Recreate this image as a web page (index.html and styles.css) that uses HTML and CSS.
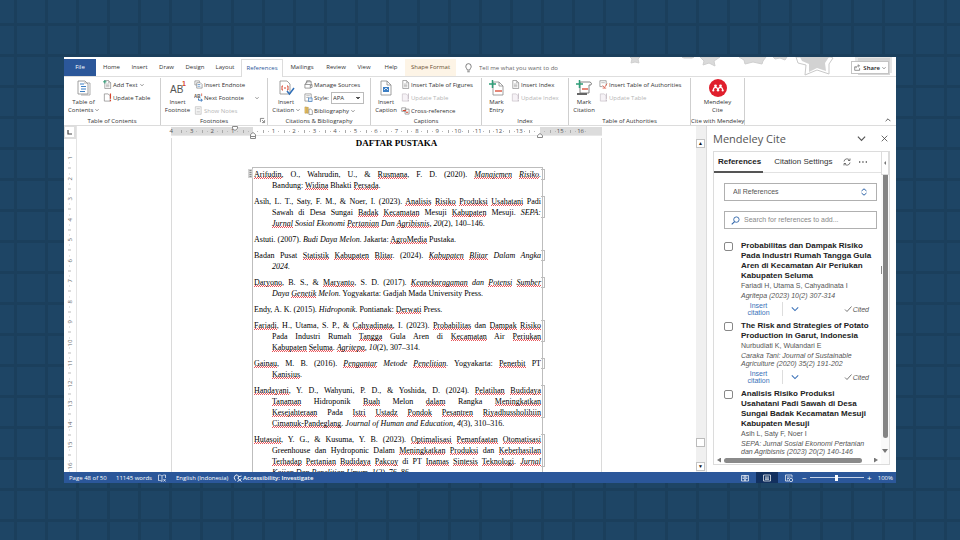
FILE: index.html
```html
<!DOCTYPE html>
<html lang="id">
<head>
<meta charset="utf-8">
<title>Daftar Pustaka</title>
<link rel="stylesheet" href="styles.css">
</head>
<body>
<svg class="defs" aria-hidden="true">
  <symbol id="page" viewBox="0 0 10 10"><path d="M2 .5h4L8.500 3v6.500H2z" fill="#fff" stroke="#777" stroke-width=".7"/><path d="M6 .5V3h2.500M3.300 4.500h3.800M3.300 6h3.800M3.300 7.500h3.800" fill="none" stroke="#888" stroke-width=".6"/></symbol>
  <symbol id="addtext" viewBox="0 0 10 10"><use href="#page"/><path d="M0 2h4M2 0v4" stroke="#2f9d78" stroke-width="1"/></symbol>
  <symbol id="update" viewBox="0 0 10 10"><path d="M1.500 1h4L8 3v6H1.500z" fill="#fff" stroke="#777" stroke-width=".7"/><path d="M8.300 .5v6M8.300 7.800v1.500" stroke="#d8452e" stroke-width="1.300"/></symbol>
  <symbol id="updateoff" viewBox="0 0 10 10"><path d="M1.500 1h4L8 3v6H1.500z" fill="#f6f2f6" stroke="#c4bcc4" stroke-width=".7"/><path d="M8.300 .5v6M8.300 7.800v1.500" stroke="#c4bcc4" stroke-width="1"/></symbol>
  <symbol id="endnote" viewBox="0 0 10 10"><path d="M1 1h5v1.500M1 1v4.500h2M3 3h4l2 2v4H3z" fill="#fff" stroke="#777" stroke-width=".7"/><path d="M4 5h3M4 7h3" stroke="#4d86c6" stroke-width=".8"/></symbol>
  <symbol id="nextfoot" viewBox="0 0 10 10"><text x="0" y="6" class="ab">AB</text><path d="M8.500 .5v3" stroke="#d8452e" stroke-width=".8"/><path d="M5 6v2h4M7.500 6.300L9.300 8 7.500 9.700" fill="none" stroke="#2f6fb8" stroke-width="1"/></symbol>
  <symbol id="notes" viewBox="0 0 10 10"><path d="M1.500 .8h6.500v8.400H1.500z" fill="#f4f4f4" stroke="#bbb" stroke-width=".7"/><path d="M3 3h3.500M3 6.500h3.500" stroke="#c5c5c5" stroke-width="1"/></symbol>
  <symbol id="sources" viewBox="0 0 10 10"><path d="M1 5l2-3h5v4M3 4V.8h4L8 2M1 5h6v4H1zM7 6l2-1v3L7 9" fill="#fff" stroke="#666" stroke-width=".7"/></symbol>
  <symbol id="style" viewBox="0 0 10 10"><path d="M1 1h7v8H1z" fill="#fff" stroke="#777" stroke-width=".7"/><path d="M2.500 3h4M2.500 5h3" stroke="#888" stroke-width=".6"/><path d="M5 5.500h4v4H5z" fill="#dfeaf6" stroke="#2f6fb8" stroke-width=".7"/></symbol>
  <symbol id="biblio" viewBox="0 0 10 10"><path d="M1 1h1.800v7H1zM3.300 1.500h1.500v6.500H3.300z" fill="#f2c45a" stroke="#a98a3f" stroke-width=".5"/><path d="M5.500 3.500h2L9.300 5v4.500H5.500z" fill="#fff" stroke="#777" stroke-width=".7"/></symbol>
  <symbol id="cross" viewBox="0 0 10 10"><path d="M.8 2h4.500v4H.8zM4.500 3.500H9V9H4.500z" fill="#fff" stroke="#777" stroke-width=".7"/><path d="M2 5h3.500M5.500 7h2.500" stroke="#d8452e" stroke-width="1.200"/></symbol>
  <symbol id="toa" viewBox="0 0 10 10"><path d="M1 .8h7v5.500M1 .8v6.500h3" fill="none" stroke="#777" stroke-width=".7"/><path d="M2.500 3h4" stroke="#888" stroke-width=".6"/><path d="M4 6l2 2.500L9 4M4 9h4" fill="none" stroke="#d8452e" stroke-width=".8"/></symbol>
  <symbol id="chev" viewBox="0 0 10 10"><path d="M1 3l4 4 4-4" fill="none" stroke="currentColor" stroke-width="1.300"/></symbol>
</svg>

<main class="word">
  <header class="tabs">
    <svg class="stars" viewBox="0 0 270 20" aria-hidden="true">
      <g fill="#dadada" stroke="#cfcfcf" stroke-width="1" stroke-linejoin="round">
        <path d="M4 0l2 2-1 4 4-1 4 1-1-4 2-2z"/><path d="M56 0l2 1h8l2-1z"/>
        <path d="M74 0l4 4-1 4 6-2 6 3-1-5 6-4z"/><path d="M113 0l5 3 1 4 8-2 9 2 1-3 3-4z"/><path d="M147 0l2 2 5-1 5 2 2-3z"/>
      </g>
      <path d="M170 0l2 6 8 2-1 10 12-5 12 4 0-10 4-6-2-1z" fill="#fff" stroke="#c9c9c9"/>
      <path d="M174 0l2 4 7 3v8l8-4 9 3-1-8 4-6z" fill="#d2d2d2"/>
      <path d="M229 0h37v16h-37z" fill="#e6e6e6"/><path d="M232 1h32v17h-32z" fill="#d6d6d6"/>
    </svg>
    <nav class="tablist">
      <a class="file" href="#">File</a>
      <a class="tab t-home" href="#">Home</a>
      <a class="tab t-insert" href="#">Insert</a>
      <a class="tab t-draw" href="#">Draw</a>
      <a class="tab t-design" href="#">Design</a>
      <a class="tab t-layout" href="#">Layout</a>
      <a class="tab active" href="#">References</a>
      <a class="tab t-mail" href="#">Mailings</a>
      <a class="tab t-review" href="#">Review</a>
      <a class="tab t-view" href="#">View</a>
      <a class="tab t-help" href="#">Help</a>
      <a class="tab shape" href="#">Shape Format</a>
    </nav>
    <label class="tell"><svg class="bulb" viewBox="0 0 10 12"><path d="M3.500 8.500C3.500 7 1.800 6.200 1.800 4a3.200 3.200 0 0 1 6.400 0c0 2.200-1.700 3-1.700 4.500zM3.500 10.500h3" fill="none" stroke="#555" stroke-width=".9"/></svg><input type="text" placeholder="Tell me what you want to do"></label>
    <button class="share"><svg class="i7" viewBox="0 0 10 10"><path d="M3 4H1v5h7V6M3 6c0-2.500 1.500-3.500 4-3.500M5.500.8L8 2.500 6 4.500" fill="none" stroke="#555" stroke-width=".9"/></svg><b>Share</b><svg class="i4"><use href="#chev"/></svg></button>
  </header>

  <section class="ribbon">
    <div class="group g-toc">
      <button class="big"><svg viewBox="0 0 16 16"><path d="M2 1h7l3 3v10H2z" fill="#fff" stroke="#888" stroke-width=".8"/><path d="M8 3h6v12H5" fill="none" stroke="#999" stroke-width=".8"/><path d="M4 4h4M5 6.500h5M5 9h5M4 11.500h5" stroke="#3d7fc4" stroke-width="1"/></svg><span>Table of<br>Contents <svg class="i4"><use href="#chev"/></svg></span></button>
      <div class="smalls">
        <button><svg class="i9"><use href="#addtext"/></svg>Add Text <svg class="i4"><use href="#chev"/></svg></button>
        <button><svg class="i9"><use href="#update"/></svg>Update Table</button>
      </div>
      <div class="caption">Table of Contents</div>
    </div>
    <div class="group g-foot">
      <button class="big"><svg viewBox="0 0 16 16"><text x="0" y="13" class="abbig">AB</text><text x="12" y="6" class="one">1</text></svg><span>Insert<br>Footnote</span></button>
      <div class="smalls">
        <button><svg class="i9"><use href="#endnote"/></svg>Insert Endnote</button>
        <button class="wide"><svg class="i9"><use href="#nextfoot"/></svg>Next Footnote <svg class="i4 end"><use href="#chev"/></svg></button>
        <button disabled><svg class="i9"><use href="#notes"/></svg>Show Notes</button>
      </div>
      <div class="caption">Footnotes <svg class="launch" viewBox="0 0 6 6"><path d="M.5 5V.5H5M2.500 2.500L5 5M5.500 2.500v3h-3" fill="none" stroke="#555" stroke-width=".8"/></svg></div>
    </div>
    <div class="group g-cite">
      <button class="big"><svg viewBox="0 0 16 16"><path d="M2 1h7l3 3v10H2z" fill="#fff" stroke="#888" stroke-width=".8"/><path d="M5 6H4v4h1M9 6h1v4H9M6 8h2" fill="none" stroke="#d8452e" stroke-width="1"/><path d="M9 11l2.500 3L16 8" fill="none" stroke="#2f6fb8" stroke-width="1.500"/></svg><span>Insert<br>Citation <svg class="i4"><use href="#chev"/></svg></span></button>
      <div class="smalls">
        <button><svg class="i9"><use href="#sources"/></svg>Manage Sources</button>
        <label class="stylebox"><svg class="i9"><use href="#style"/></svg>Style: <select><option>APA</option></select></label>
        <button><svg class="i9"><use href="#biblio"/></svg>Bibliography <svg class="i4"><use href="#chev"/></svg></button>
      </div>
      <div class="caption">Citations &amp; Bibliography</div>
    </div>
    <div class="group g-cap">
      <button class="big"><svg viewBox="0 0 16 16"><path d="M3 1h6l4 4v10H3z" fill="#fff" stroke="#888" stroke-width=".8"/><path d="M9 1v4h4" fill="none" stroke="#888" stroke-width=".8"/><path d="M5 7h6v5H5z" fill="#3d7fc4"/><path d="M6 10l2-2 2 2" fill="none" stroke="#fff" stroke-width=".8"/></svg><span>Insert<br>Caption</span></button>
      <div class="smalls">
        <button><svg class="i9"><use href="#page"/></svg>Insert Table of Figures</button>
        <button disabled><svg class="i9"><use href="#updateoff"/></svg>Update Table</button>
        <button><svg class="i9"><use href="#cross"/></svg>Cross-reference</button>
      </div>
      <div class="caption">Captions</div>
    </div>
    <div class="group g-index">
      <button class="big"><svg viewBox="0 0 16 16"><path d="M4 2h6l4 4v9H4z" fill="#fff" stroke="#888" stroke-width=".8"/><path d="M10 2v4h4" fill="none" stroke="#888" stroke-width=".8"/><path d="M6 11h7" stroke="#d8452e" stroke-width="1.300"/><path d="M0 4h7M3.500 0v8" stroke="#2f9d78" stroke-width="1.500"/></svg><span>Mark<br>Entry</span></button>
      <div class="smalls">
        <button><svg class="i9"><use href="#page"/></svg>Insert Index</button>
        <button disabled><svg class="i9"><use href="#updateoff"/></svg>Update Index</button>
      </div>
      <div class="caption">Index</div>
    </div>
    <div class="group g-auth">
      <button class="big"><svg viewBox="0 0 16 16"><path d="M4 2h10a2 2 0 0 1 1 3h-2v8H4z" fill="#fff" stroke="#777" stroke-width=".9"/><path d="M1 13h10v2H1z" fill="#666"/><path d="M6 9h6" stroke="#d8452e" stroke-width="1.300"/><path d="M0 4h7M3.500 0v8" stroke="#2f9d78" stroke-width="1.500"/></svg><span>Mark<br>Citation</span></button>
      <div class="smalls">
        <button><svg class="i9"><use href="#toa"/></svg>Insert Table of Authorities</button>
        <button disabled><svg class="i9"><use href="#updateoff"/></svg>Update Table</button>
      </div>
      <div class="caption">Table of Authorities</div>
    </div>
    <div class="group g-mend">
      <button class="big"><svg class="mend" viewBox="0 0 18 18"><circle cx="9" cy="9" r="9" fill="#e01f2d"/><g fill="#fff"><circle cx="6.500" cy="6.800" r="1.400"/><circle cx="11.500" cy="6.800" r="1.400"/><circle cx="4.300" cy="11.500" r="1.100"/><circle cx="13.700" cy="11.500" r="1.100"/><circle cx="9" cy="11.300" r="1.200"/></g><path d="M4.300 11c.3-2 1-2.600 2.200-2.600s2 .8 2.500 2c.5-1.200 1.300-2 2.500-2s1.900.6 2.200 2.600" fill="none" stroke="#fff" stroke-width="1.200"/></svg><span>Mendeley<br>Cite</span></button>
      <div class="caption">Cite with Mendeley</div>
    </div>
    <button class="collapse" aria-label="Collapse the ribbon"><svg class="i6 flip"><use href="#chev"/></svg></button>
  </section>

  <div class="body">
    <div class="vside">
      <div class="corner"><svg class="i5" viewBox="0 0 5 5"><path d="M1 0v4h4" fill="none" stroke="#444" stroke-width="1.200"/></svg></div>
      <div class="vruler"><span>1</span><span>2</span><span>3</span><span>4</span><span>5</span><span>6</span><span>7</span><span>8</span><span>9</span><span>10</span><span>11</span><span>12</span><span>13</span><span>14</span><span>15</span><span>16</span></div>
    </div>
    <div class="canvas">
      <div class="ruler">
        <div class="nums"><span>4</span><span>3</span><span>2</span><span>1</span><span></span><span>1</span><span>2</span><span>3</span><span>4</span><span>5</span><span>6</span><span>7</span><span>8</span><span>9</span><span>10</span><span>11</span><span>12</span><span>13</span><span></span><span>15</span><span>16</span></div>
        <svg class="mark first" viewBox="0 0 6 5"><path d="M.5.5h5v2L3 4.500.5 2.500z"/></svg>
        <svg class="mark hang" viewBox="0 0 6 7"><path d="M3 .5l2.500 2v4h-5v-4zM.5 4.500h5"/></svg>
        <svg class="mark right" viewBox="0 0 6 5"><path d="M3 .5l2.500 2v2h-5v-2z"/></svg>
      </div>
      <article class="sheet">
        <h1>DAFTAR PUSTAKA</h1>
        <div class="bib">
          <svg class="grip" viewBox="0 0 5 9"><path d="M0 0h5v9H0z" fill="#d4d4d4"/><path d="M1.500 1.500h2M1.500 3.500h2M1.500 5.500h2M1.500 7.500h2" stroke="#777" stroke-width=".8"/></svg>
          <p class="multi"><span class="j"><u>Arifudin</u>, O., Wahrudin, U., &amp; <u>Rusmana</u>, F. D. (2020). <i><u>Manajemen</u> <u>Risiko</u>.</i></span><span>Bandung: <u>Widina</u> Bhakti <u>Persada</u>.</span></p>
          <p class="multi"><span class="j">Asih, L. T., Saty, F. M., &amp; Noer, I. (2023). <u>Analisis</u> <u>Risiko</u> <u>Produksi</u> <u>Usahatani</u> Padi</span><span class="j">Sawah di Desa Sungai <u>Badak</u> <u>Kecamatan</u> Mesuji <u>Kabupaten</u> Mesuji. <i>SEPA:</i></span><span><i><u>Jurnal</u> Sosial Ekonomi <u>Pertanian</u> Dan <u>Agribisnis</u>, 20</i>(2), 140–146.</span></p>
          <p><span>Astuti. (2007). <i>Budi Daya Melon.</i> Jakarta: <u>AgroMedia</u> Pustaka.</span></p>
          <p class="multi"><span class="j">Badan Pusat <u>Statistik</u> <u>Kabupaten</u> <u>Blitar</u>. (2024). <i><u>Kabupaten</u> <u>Blitar</u> Dalam Angka</i></span><span><i>2024.</i></span></p>
          <p class="multi"><span class="j"><u>Daryono</u>, B. S., &amp; <u>Maryanto</u>, S. D. (2017). <i><u>Keanekaragaman</u> dan <u>Potensi</u> <u>Sumber</u></i></span><span><i>Daya <u>Genetik</u> Melon.</i> Yogyakarta: Gadjah Mada University Press.</span></p>
          <p><span>Endy, A. K. (2015). <i>Hidroponik.</i> Pontianak: <u>Derwati</u> Press.</span></p>
          <p class="multi"><span class="j"><u>Fariadi</u>, H., Utama, S. P., &amp; <u>Cahyadinata</u>, I. (2023). <u>Probabilitas</u> dan <u>Dampak</u> <u>Risiko</u></span><span class="j">Pada Industri Rumah <u>Tangga</u> Gula Aren di <u>Kecamatan</u> Air <u>Periukan</u></span><span><u>Kabupaten</u> <u>Seluma</u>. <i><u>Agritepa</u>, 10</i>(2), 307–314.</span></p>
          <p class="multi"><span class="j"><u>Gainau</u>, M. B. (2016). <i><u>Pengantar</u> Metode <u>Penelitian</u>.</i> Yogyakarta: <u>Penerbit</u> PT</span><span><u>Kanisius</u>.</span></p>
          <p class="multi"><span class="j"><u>Handayani</u>, Y. D., Wahyuni, P. D., &amp; Yoshida, D. (2024). <u>Pelatihan</u> <u>Budidaya</u></span><span class="j"><u>Tanaman</u> Hidroponik <u>Buah</u> Melon <u>dalam</u> Rangka <u>Meningkatkan</u></span><span class="j"><u>Kesejahteraan</u> Pada <u>Istri</u> <u>Ustadz</u> <u>Pondok</u> <u>Pesantren</u> <u>Riyadhussholihiin</u></span><span><u>Cimanuk-Pandeglang</u>. <i>Journal of Human and Education, 4</i>(3), 310–316.</span></p>
          <p class="multi"><span class="j"><u>Hutasoit</u>, Y. G., &amp; Kusuma, Y. B. (2023). <u>Optimalisasi</u> <u>Pemanfaatan</u> <u>Otomatisasi</u></span><span class="j">Greenhouse dan Hydroponic Dalam <u>Meningkatkan</u> <u>Produksi</u> dan <u>Keberhasilan</u></span><span class="j"><u>Terhadap</u> <u>Pertanian</u> <u>Budidaya</u> <u>Pakcoy</u> di PT <u>Inamas</u> <u>Sintesis</u> <u>Teknologi</u>. <i><u>Jurnal</u></i></span><span><i>Kajian Dan Penelitian Umum, 1</i>(2), 76–86.</span></p>
        </div>
      </article>
    </div>
    <div class="vscroll"><button aria-label="Scroll up">▲</button><span class="thumb"></span><button aria-label="Scroll down">▼</button></div>
    <aside class="pane">
      <div class="panehead"><h2>Mendeley Cite</h2><svg class="i9"><use href="#chev"/></svg><svg class="i7" viewBox="0 0 8 8"><path d="M.8.8l6.400 6.400M7.200.8L.8 7.200" stroke="#444" stroke-width=".9"/></svg></div>
      <div class="frame">
        <div class="content">
          <nav class="ptabs"><a class="on" href="#">References</a><a href="#">Citation Settings</a><svg class="i8" viewBox="0 0 8 8"><path d="M1 3.500A3 3 0 0 1 6.500 2.200M7 .5v2H5M7 4.500A3 3 0 0 1 1.500 5.800M1 7.500v-2h2" fill="none" stroke="#555" stroke-width=".8"/></svg><svg class="i8 dots" viewBox="0 0 8 8"><path d="M0 4h1.300M3.300 4h1.300M6.700 4H8" stroke="#555" stroke-width="1.300"/></svg></nav>
          <div class="fields">
            <label class="combo"><select aria-label="Library"><option>All References</option></select><svg class="i8" viewBox="0 0 8 8"><path d="M1.500 3L4 .8 6.500 3M1.500 5L4 7.200 6.500 5" fill="none" stroke="#2d63a8" stroke-width="1"/></svg></label>
            <label class="search"><svg class="i9" viewBox="0 0 10 10"><circle cx="6" cy="4" r="3" fill="none" stroke="#2d63a8"/><path d="M4 6.200L.8 9.300" stroke="#2d63a8" stroke-width="1.200"/></svg><input type="text" placeholder="Search for references to add..."></label>
          </div>
          <div class="item">
            <input type="checkbox" id="r1">
            <div><label for="r1">Probabilitas dan Dampak Risiko<br>Pada Industri Rumah Tangga Gula<br>Aren di Kecamatan Air Periukan<br>Kabupaten Seluma</label><div class="auth">Fariadi H, Utama S, Cahyadinata I</div><div class="src">Agritepa (2023) 10(2) 307-314</div>
            <div class="acts"><a href="#">Insert<br>citation</a><svg class="i8"><use href="#chev"/></svg><span class="cited"><svg class="i8" viewBox="0 0 8 8"><path d="M1 4.500l2 2 4.500-5" fill="none" stroke="#666" stroke-width=".9"/></svg>Cited</span></div></div>
          </div>
          <div class="item">
            <input type="checkbox" id="r2">
            <div><label for="r2">The Risk and Strategies of Potato<br>Production in Garut, Indonesia</label><div class="auth">Nurbudiati K, Wulandari E</div><div class="src">Caraka Tani: Journal of Sustainable<br>Agriculture (2020) 35(2) 191-202</div>
            <div class="acts"><a href="#">Insert<br>citation</a><svg class="i8"><use href="#chev"/></svg><span class="cited"><svg class="i8" viewBox="0 0 8 8"><path d="M1 4.500l2 2 4.500-5" fill="none" stroke="#666" stroke-width=".9"/></svg>Cited</span></div></div>
          </div>
          <div class="item">
            <input type="checkbox" id="r3">
            <div><label for="r3">Analisis Risiko Produksi<br>Usahatani Padi Sawah di Desa<br>Sungai Badak Kecamatan Mesuji<br>Kabupaten Mesuji</label><div class="auth">Asih L, Saty F, Noer I</div><div class="src">SEPA: Jurnal Sosial Ekonomi Pertanian<br>dan Agribisnis (2023) 20(2) 140-146</div></div>
          </div>
          <div class="hbar"><span class="larr"></span><span class="hthumb"></span><span class="rarr"></span></div>
        </div>
        <div class="rail"><span class="railtop"><span class="larr"></span></span><span class="railthumb"></span><span class="darr"></span></div>
        <span class="inner"></span>
      </div>
    </aside>
  </div>

  <footer class="status">
    <span class="s-page">Page 48 of 50</span><span class="s-words">11145 words</span>
    <svg class="i8" viewBox="0 0 8 8"><path d="M4 2C3 1 2 1 .5 1v5.500C2 6.500 3 6.500 4 7.500M4 2c1-1 2-1 3.500-1v3M4 2v5.500M5.500 5l2 2.500M7.500 5l-2 2.500" fill="none" stroke="#fff" stroke-width=".7"/></svg>
    <span class="s-lang">English (Indonesia)</span>
    <svg class="i8" viewBox="0 0 8 8"><path d="M3 .8A3 3 0 0 0 2 6.500M3.500.8l1 2 3-.8M4.500 2.800L4 5M4 4.500l3.500 3M7.500 4.500l-4 3" fill="none" stroke="#fff" stroke-width=".9"/></svg>
    <b>Accessibility: Investigate</b>
    <span class="views">
      <button aria-label="Read mode"><svg class="i8" viewBox="0 0 8 8"><path d="M4 1.500H.5V7H4zM4 1.500h3.500V7H4zM1.500 3h1.500M1.500 4.500h1.500M5 3h1.500M5 4.500h1.500" fill="none" stroke="#fff" stroke-width=".7"/></svg></button>
      <button class="sel" aria-label="Print layout"><svg class="i8" viewBox="0 0 8 8"><path d="M.5 1h7v6h-7zM2 3h4M2 4.200h4M2 5.400h4" fill="none" stroke="#fff" stroke-width=".7"/></svg></button>
      <button aria-label="Web layout"><svg class="i8" viewBox="0 0 8 8"><path d="M7 3.500V1H.5v6H4M2 3h3.500M2 4.500h2M2 6h1" fill="none" stroke="#fff" stroke-width=".7"/><circle cx="6" cy="6" r="1.700" fill="none" stroke="#fff" stroke-width=".7"/></svg></button>
    </span>
    <span class="zoom"><button>−</button><input type="range" min="0" max="100" value="50" aria-label="Zoom"><button>+</button></span>
    <span class="pct">100%</span>
  </footer>
</main>
</body>
</html>
```
FILE: styles.css
```css
* { box-sizing: border-box; }
body {
  margin: 0;
  height: 100vh;
  padding: 57px 64px;
  display: flex;
  font: 6px/8px "Open Sans", "Noto Sans", sans-serif;
  color: #333;
  background-color: #1e4565;
  background-image:
    linear-gradient(90deg, #1b3f5c 3px, transparent 3px),
    linear-gradient(#1b3f5c 3px, transparent 3px);
  background-size: 31px 31px;
  background-position: 14px 23px;
}
button, input, select { font: inherit; color: inherit; margin: 0; padding: 0; border: 0; background: none; outline: 0; }
a { color: inherit; text-decoration: none; }
svg { flex: none; overflow: visible; }
.defs { position: absolute; width: 0; height: 0; }
.i4 { width: 4px; height: 4px; }
.i5 { width: 5px; height: 5px; }
.i6 { width: 6px; height: 6px; }
.i7 { width: 7px; height: 7px; }
.i8 { width: 8px; height: 8px; }
.i9 { width: 9px; height: 9px; }
.flip { transform: rotate(180deg); }

.word { flex: 1; min-width: 0; display: flex; flex-direction: column; background: #fff; }

/* Title tabs */
.tabs { position: relative; display: flex; align-items: flex-end; height: 20px; border-bottom: 1px solid #dedede; }
.stars { position: absolute; right: 0; top: 0; width: 270px; height: 20px; overflow: hidden; }
.tablist { display: flex; align-items: flex-end; }
.tablist a { height: 17px; line-height: 17px; text-align: center; white-space: nowrap; }
.tablist .file { width: 32px; background: #2b579a; color: #fff; line-height: 16px; }
.t-home { width: 31px; }
.t-insert { width: 25px; }
.t-draw { width: 29px; }
.t-design { width: 28px; }
.t-layout { width: 32px; }
.t-mail { width: 38px; }
.t-review { width: 30px; }
.t-view { width: 26px; }
.t-help { width: 28px; }
.tablist .active { width: 42px; margin: 0 0 -1px; height: 18px; background: #fff; border: 1px solid #dcdcdc; border-bottom: 0; color: #2b579a; }
.shape { width: 51px; background: #fdf4e6; color: #6b5132; }
.tell { display: flex; align-items: center; gap: 6px; height: 17px; margin-left: 8px; flex: 1; }
.bulb { width: 9px; height: 10px; }
.tell input { flex: 1; min-width: 0; }
.tell input::placeholder { color: #666; opacity: 1; }
.share { position: relative; display: flex; align-items: center; gap: 2px; height: 13px; margin: 0 7px 2px 0; padding: 0 2px; background: #fff; border: 1px solid #c4c4c4; }
.share b { font-weight: 600; color: #222; }

/* Ribbon */
.ribbon { display: flex; height: 49px; padding-top: 1px; border-bottom: 1px solid #dcdcdc; }
.group { display: grid; grid-template: 39px 8px / auto 1fr; border-right: 1px solid #cfcfcf; white-space: nowrap; }
.big { display: flex; flex-direction: column; align-items: center; gap: 2px; padding-top: 2px; line-height: 8px; }
.big > svg { width: 16px; height: 16px; }
.big > .mend { width: 18px; height: 18px; margin: -1px 0; }
.smalls { display: flex; flex-direction: column; }
.smalls button, .stylebox { display: flex; align-items: center; gap: 1px; height: 13px; }
.smalls button:disabled { color: #b5b5b5; }
.smalls .i4 { margin-left: 1px; }
.smalls .wide { width: 100%; }
.smalls .end { margin: 0 8px 0 auto; }
.caption { grid-column: 1 / -1; position: relative; text-align: center; }
.launch { position: absolute; right: 2px; top: 1px; width: 5px; height: 5px; }
.g-toc { width: 97px; }
.g-toc .big { width: 39px; }
.g-foot { width: 107px; }
.g-foot .big { width: 33px; }
.g-cite { width: 103px; }
.g-cite .big { width: 36px; }
.g-cap { width: 111px; }
.g-cap .big { width: 30px; }
.g-index { width: 87px; }
.g-index .big { width: 29px; }
.g-auth { width: 122px; }
.g-auth .big { width: 30px; }
.g-mend { width: 54px; }
.g-mend .big { grid-column: 1 / -1; }
.abbig { font: 10px "Liberation Sans", sans-serif; fill: #555; }
.one { font: bold 7px "Liberation Sans", sans-serif; fill: #d8452e; }
.ab { font: bold 5px "Liberation Sans", sans-serif; fill: #555; }
.stylebox select { width: 33px; height: 12px; margin-left: 1px; padding-left: 1px; border: 1px solid #bbb; appearance: none;
  background: linear-gradient(45deg, transparent 50%, #555 50%) right 5px center / 2px 2px no-repeat, linear-gradient(-45deg, transparent 50%, #555 50%) right 3px center / 2px 2px no-repeat; }
.collapse { margin: auto 5px 0 auto; height: 8px; }

/* Document area */
.body { flex: 1; min-height: 0; display: flex; overflow: hidden; }
.vside { width: 13px; border-right: 1px solid #e4e4e4; }
.corner { height: 13px; display: grid; place-items: center; border: 2px solid #dedede; border-width: 1px 2px 2px 1px; }
.vruler { display: flex; flex-direction: column; height: 328px; margin-top: 9px; font-size: 6px; color: #666; }
.vruler span { flex: 1; writing-mode: vertical-rl; transform: rotate(180deg); text-align: center; line-height: 12px;
  background: linear-gradient(#bbb, #bbb) center top / 3px 1px no-repeat, linear-gradient(#ccc, #ccc) center 25% / 1px 1px no-repeat, linear-gradient(#ccc, #ccc) center 75% / 1px 1px no-repeat; }
.canvas { flex: 1; min-width: 0; display: flex; flex-direction: column; align-items: center; overflow: hidden; }
.ruler { position: relative; width: 431px; height: 9px; margin-top: 1px; flex: none;
  background: linear-gradient(90deg, #dcdcdc 82px, #fff 82px calc(100% - 62px), #dcdcdc 0); border-bottom: 1px solid #e8e8e8; }
.nums { display: flex; width: 430px; margin-left: -10px; color: #555; }
.nums span { flex: 1; height: 8px; text-align: center;
  background: linear-gradient(#aaa, #aaa) left center / 1px 3px no-repeat, linear-gradient(#bbb, #bbb) 25% center / 1px 1px no-repeat, linear-gradient(#bbb, #bbb) 75% center / 1px 1px no-repeat; }
.nums span:first-child { background: none; }
.mark { position: absolute; width: 6px; fill: #fff; stroke: #888; stroke-width: 1; }
.first { left: 61px; top: -1px; height: 5px; }
.hang { left: 79px; top: 5px; height: 7px; }
.right { right: 59px; top: 6px; height: 5px; }
.sheet { width: 431px; flex: 1; min-height: 0; margin-top: 2px; padding: 0 60px 0 80px; border: 1px solid #dadada; border-width: 0 1px;
  font: 8px/11px "Liberation Serif", serif; color: #000; }
h1 { margin: 0; font-size: 9px; line-height: 11px; text-align: center; }
.bib { position: relative; margin-top: 18px; padding-top: 1px; width: 291px; border: 1px solid #bdbdbd; border-bottom: 0; }
.grip { position: absolute; left: -5px; top: 1px; width: 5px; height: 9px; }
.bib p { position: relative; margin: 0 1px 5px 1px; padding-left: 18px; white-space: nowrap; }
.bib p span { display: block; }
.bib p span:first-child { margin-left: -18px; }
.bib .j { text-align: justify; text-align-last: justify; }
.multi::after { content: ""; position: absolute; right: -4px; top: 0; bottom: 11px; width: 3px; border: 1px solid #bdbdbd; border-left: 0; }
u { text-decoration: none; background:
  linear-gradient(90deg, #e8555a 1px, transparent 1px) 0 100% / 2px 1px repeat-x,
  linear-gradient(90deg, transparent 1px, #e8555a 1px) 0 calc(100% - 1px) / 2px 1px repeat-x; }

.vscroll { width: 10px; display: flex; flex-direction: column; background: #f0f0f0; padding: 13px 1px 1px 0; }
.vscroll button { height: 9px; font-size: 5px; line-height: 7px; background: #fff; border: 1px solid #c4c4c4; color: #111; }
.thumb { height: 9px; margin: auto 0 15px; background: #fff; border: 1px solid #bbb; }

/* Citation pane */
.pane { width: 190px; display: flex; flex-direction: column; padding: 0 6px 7px; border-left: 1px solid #dcdcdc; font-family: "Liberation Sans", sans-serif; }
.panehead { display: flex; align-items: center; height: 25px; color: #555; }
h2 { margin: 0 auto 0 0; font: 11px/16px "Open Sans", sans-serif; }
.panehead .i7 { margin: 0 2px 0 15px; }
.frame { position: relative; flex: 1; min-height: 0; display: flex; border: 1px solid #dcdcdc; }
.content { flex: 1; min-width: 0; display: flex; flex-direction: column; }
.ptabs { display: flex; align-items: center; height: 21px; font-size: 8px; border-bottom: 1px solid #e2e2e2; white-space: nowrap; }
.ptabs a { height: 21px; line-height: 19px; padding: 0 2px 0 4px; }
.ptabs .on { padding: 0 2px 0 4px; margin-right: 7px; font-weight: bold; color: #222; border-bottom: 2px solid #555; }
.ptabs .i8 { margin: 0 8px 0 9px; }
.ptabs .dots { margin: 0; }
.fields { display: grid; gap: 10px; padding: 10px 4px 12px 10px; font-size: 7px; }
.combo, .search { display: flex; align-items: center; height: 18px; padding: 0 8px; border: 1px solid #b0b0b0; color: #555; }
.combo select { flex: 1; appearance: none; }
.search { padding-left: 6px; gap: 4px; }
.search input { flex: 1; min-width: 0; }
.search input::placeholder { color: #888; opacity: 1; }
.item { display: flex; gap: 8px; padding: 0 4px 0 10px; white-space: nowrap; font-size: 7px; line-height: 8px; color: #555; }
.item > div { flex: 1; min-width: 0; }
.item input { appearance: none; width: 9px; height: 9px; margin-top: 1px; border: 1px solid #888; border-radius: 2px; background: #fff; }
.item label { display: block; font-size: 8px; line-height: 10px; font-weight: bold; color: #222; }
.auth { margin-top: 1px; }
.src { margin-top: 2px; font-style: italic; }
.acts { display: flex; align-items: center; height: 18px; margin-bottom: 3px; line-height: 7px; }
.acts a { width: 42px; height: 14px; padding-right: 6px; text-align: center; color: #3a71b8; border-right: 1px solid #ddd; }
.acts > .i8 { margin-left: 8px; color: #3a71b8; }
.cited { display: flex; align-items: center; gap: 1px; margin-left: auto; padding-right: 8px; font-style: italic; }
.hbar { display: flex; align-items: center; gap: 3px; height: 10px; margin-top: auto; padding: 0 3px; }
.hthumb { flex: 1; height: 5px; margin-right: 9px; background: #8a8a8a; border-radius: 3px; }
.larr { width: 4px; height: 5px; background: #777; clip-path: polygon(100% 0, 100% 100%, 0 50%); }
.rarr { width: 4px; height: 5px; background: #777; clip-path: polygon(0 0, 100% 50%, 0 100%); }
.rail { width: 8px; display: flex; flex-direction: column; align-items: center; background: #fafafa; }
.railtop { width: 8px; height: 23px; display: grid; place-items: center; background: #fff; border: 1px solid #dcdcdc; border-top: 0; }
.railtop .larr { width: 2px; height: 4px; }
.railthumb { width: 5px; flex: 1; background: #858585; border-radius: 0 0 3px 3px; }
.darr { width: 6px; height: 4px; margin: 11px 0; background: #777; clip-path: polygon(0 0, 100% 0, 50% 100%); }
.inner { position: absolute; right: 7px; top: 114px; width: 1px; height: 8px; background: #888; }

/* Status bar */
.status { display: flex; align-items: center; height: 11px; padding: 0 3px 0 5px; background: #2b579a; color: #fff; white-space: nowrap; }
.s-page { width: 47px; }
.s-words { width: 42px; }
.s-lang { width: 68px; padding-left: 10px; }
.status b { font-weight: 600; margin-left: 1px; }
.views { display: flex; margin-left: auto; }
.views button { width: 22px; height: 11px; display: grid; place-items: center; }
.views .sel { background: #12305f; }
.zoom { display: flex; align-items: center; gap: 3px; margin: 0 6px 0 2px; }
.zoom button { width: 5px; line-height: 8px; font-size: 8px; }
.zoom input { appearance: none; width: 54px; height: 8px; background: linear-gradient(#c5d3e8, #c5d3e8) center / 100% 1px no-repeat; }
.zoom input::-webkit-slider-thumb { appearance: none; width: 3px; height: 6px; background: #fff; }
```
